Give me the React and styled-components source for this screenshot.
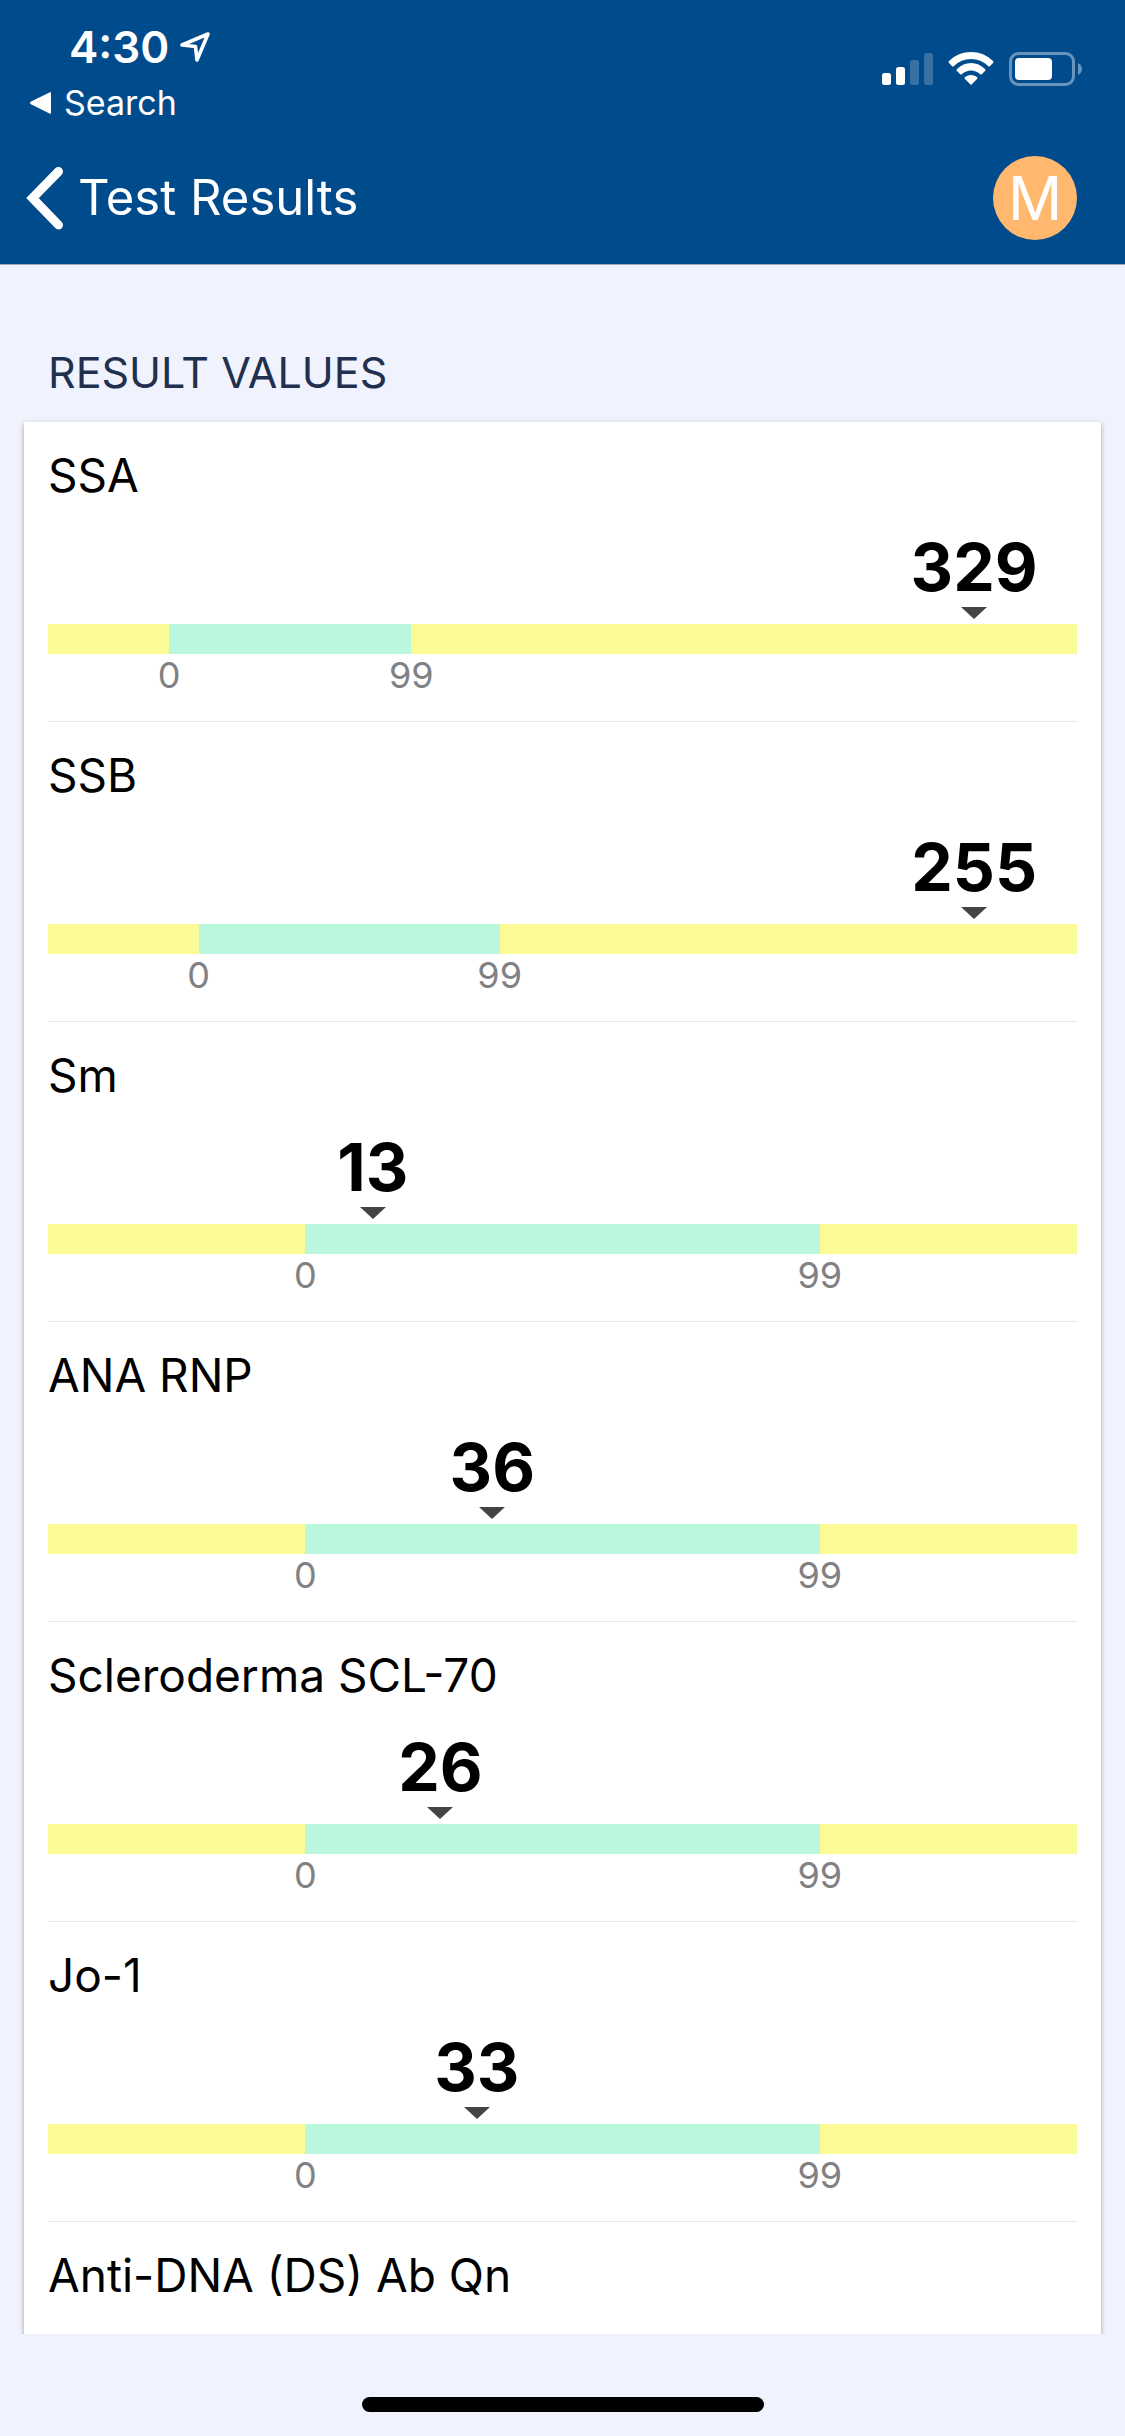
import React from 'react';
import styled, { createGlobalStyle } from 'styled-components';

const GlobalStyle = createGlobalStyle`
    body {
        margin: 0;
        background: #f0f3fd;
        font-family: Inter, "Liberation Sans", sans-serif;
    }

    * {
        box-sizing: border-box;
    }

    button {
        padding: 0;
        border: 0;
        background: none;
        color: inherit;
        font: inherit;
        cursor: pointer;
    }
`;

const Screen = styled.div`
    display: flex;
    flex-direction: column;
    height: 100vh;
`;

const Header = styled.header`
    flex: none;
    background: #004b8b;
    color: #fff;
    border-bottom: 1px solid #a0a7b3;
`;

const StatusBar = styled.div`
    display: flex;
    justify-content: space-between;
    height: 132px;
    padding: 6px 42px 0 30px;
`;

const StatusLeft = styled.div`
    display: flex;
    flex-direction: column;
    align-items: flex-start;
    padding-top: 13px;
`;

const Clock = styled.div`
    display: flex;
    align-items: center;
    gap: 10px;
    padding-left: 39px;
    font-size: 44px;
    font-weight: 600;
    line-height: 56px;
`;

const ReturnButton = styled.button`
    display: flex;
    align-items: center;
    gap: 12px;
    font-size: 34px;
    line-height: 56px;
`;

const StatusIcons = styled.div`
    display: flex;
    align-items: center;
    gap: 15px;
`;

const NavBar = styled.nav`
    display: flex;
    align-items: center;
    justify-content: space-between;
    height: 132px;
    padding: 0 48px 0 26px;
`;

const BackButton = styled.button`
    display: flex;
    align-items: center;
    gap: 14px;
    font-size: 49px;
    line-height: 60px;
`;

const Avatar = styled.button`
    width: 84px;
    height: 84px;
    border-radius: 50%;
    background: #ffb86e;
    font-size: 60px;
    line-height: 84px;
    text-align: center;
`;

const Content = styled.main`
    display: flex;
    flex: 1;
    flex-direction: column;
    min-height: 0;
    padding: 77px 24px 0;
    overflow: hidden;
`;

const SectionTitle = styled.h2`
    flex: none;
    margin: 0;
    padding: 0 24px 20px;
    color: #22304f;
    font-size: 43px;
    font-weight: 400;
    line-height: 60px;
    text-transform: uppercase;
`;

const Card = styled.ul`
    flex: none;
    margin: 0;
    padding: 0 24px;
    list-style: none;
    background: #fff;
    box-shadow: 0 2px 5px rgba(0, 0, 0, 0.32);
`;

const ResultRow = styled.li`
    height: 300px;
    padding-top: 24px;
    border-bottom: 1px solid #e5e6e8;
`;

const ResultName = styled.div`
    color: #000;
    font-size: 46px;
    line-height: 58px;
`;

const Marker = styled.div`
    display: flex;
    flex-direction: column;
    align-items: center;
    width: 0;
    padding: 23px 0 5px;
`;

const Value = styled.div`
    color: #000;
    font-size: 66px;
    font-weight: 700;
    line-height: 80px;
`;

const Pointer = styled.div`
    border: 13px solid transparent;
    border-top: 12px solid #444;
    border-bottom: 0;
`;

const Scale = styled.div`
    display: grid;
    grid-template-rows: 30px 42px;
`;

const Zone = styled.div`
    background: ${props => props.$normal ? '#bbf7dc' : '#fafa96'};
`;

const Limit = styled.div`
    display: flex;
    grid-column: ${props => props.$column};
    justify-content: center;
    width: 0;
    color: #808184;
    font-size: 36px;
    line-height: 42px;
`;

const HomeArea = styled.footer`
    display: flex;
    flex: none;
    justify-content: center;
    height: 102px;
    padding-top: 63px;
`;

const HomeIndicator = styled.div`
    width: 402px;
    height: 15px;
    border-radius: 8px;
    background: #000;
`;

const results = [
    { name: 'SSA', value: 329, low: 0, high: 99 },
    { name: 'SSB', value: 255, low: 0, high: 99 },
    { name: 'Sm', value: 13, low: 0, high: 99 },
    { name: 'ANA RNP', value: 36, low: 0, high: 99 },
    { name: 'Scleroderma SCL-70', value: 26, low: 0, high: 99 },
    { name: 'Jo-1', value: 33, low: 0, high: 99 },
    { name: 'Anti-DNA (DS) Ab Qn' },
];

// Half a normal range is shown on each side, a high value sits at 90% of the bar
const getScale = ({ value, low, high }) => {
    const margin = (high - low) / 2;
    const start = low - margin;
    const span = value > high + margin ? (value - start) / 0.9 : (high - low) * 2;

    return {
        before: margin / span * 100,
        normal: (high - low) / span * 100,
        marker: (value - start) / span * 100,
    };
};

const LocationIcon = () => (
    <svg width="32" height="32" viewBox="0 0 32 32" fill="none" stroke="#fff" strokeWidth="3.600" strokeLinejoin="round" aria-hidden="true">
        <path d="M29 3 3 14 16.500 15.500 18 29Z" />
    </svg>
);

const ReturnIcon = () => (
    <svg width="22" height="24" viewBox="0 0 22 24" fill="#fff" aria-hidden="true">
        <path d="M20 1.200 1 10.500Q-1 12 1 13.300L20 22.800Q21 23 21 22V2Q21 1 20 1.200Z" />
    </svg>
);

const SignalIcon = () => (
    <svg width="51" height="34" viewBox="0 0 51 34" fill="#fff" aria-hidden="true">
        <rect x="0" y="21" width="9" height="12" rx="2.500" />
        <rect x="14" y="15" width="9" height="18" rx="2.500" />
        <rect x="28" y="8" width="9" height="25" rx="2.500" opacity="0.22" />
        <rect x="42" y="1" width="9" height="32" rx="2.500" opacity="0.22" />
    </svg>
);

const WifiIcon = () => (
    <svg width="46" height="34" viewBox="0 0 46 34" fill="#fff" aria-hidden="true">
        <path d="M1 9Q10 0 23 0T45 9Q46 10 45 11L42 14Q41 15 40 14Q33 7 23 7T6 14Q5 15 4 14L1 11Q0 10 1 9Z" />
        <path d="M9 17Q15 11 23 11T37 17Q38 18 37 19L34 22Q33 23 32 22Q28 18.500 23 18.500T14 22Q13 23 12 22L9 19Q8 18 9 17Z" />
        <path d="M17 25Q20 23 23 23T29 25Q30 26 29 27L23 33L17 27Q16 26 17 25Z" />
    </svg>
);

const BatteryIcon = () => (
    <svg width="74" height="34" viewBox="0 0 74 34" aria-hidden="true">
        <rect x="1.500" y="1.500" width="63" height="31" rx="8" fill="none" stroke="#6893bb" strokeWidth="3" />
        <rect x="6" y="6" width="37" height="22" rx="4" fill="#fff" />
        <path d="M69 11Q73 13 73 17T69 23Z" fill="#6893bb" />
    </svg>
);

const ChevronIcon = () => (
    <svg width="38" height="64" viewBox="0 0 38 64" fill="none" stroke="#fff" strokeWidth="9" strokeLinecap="round" strokeLinejoin="miter" aria-hidden="true">
        <path d="M32.500 5.500 6.500 32 32.500 59" />
    </svg>
);

const Result = ({ result }) => {
    if (result.value === undefined) {
        return (
            <ResultRow>
                <ResultName>{result.name}</ResultName>
            </ResultRow>
        );
    }

    const { before, normal, marker } = getScale(result);

    return (
        <ResultRow>
            <ResultName>{result.name}</ResultName>
            <Marker style={{ marginLeft: `${marker}%` }}>
                <Value>{result.value}</Value>
                <Pointer />
            </Marker>
            <Scale style={{ gridTemplateColumns: `${before}% ${normal}% 1fr` }}>
                <Zone />
                <Zone $normal />
                <Zone />
                <Limit $column={2}>{result.low}</Limit>
                <Limit $column={3}>{result.high}</Limit>
            </Scale>
        </ResultRow>
    );
}

const App = () => {
    return (
        <Screen>
            <GlobalStyle />
            <Header>
                <StatusBar>
                    <StatusLeft>
                        <Clock>4:30 <LocationIcon /></Clock>
                        <ReturnButton type="button"><ReturnIcon /> Search</ReturnButton>
                    </StatusLeft>
                    <StatusIcons>
                        <SignalIcon />
                        <WifiIcon />
                        <BatteryIcon />
                    </StatusIcons>
                </StatusBar>
                <NavBar>
                    <BackButton type="button"><ChevronIcon /> Test Results</BackButton>
                    <Avatar type="button">M</Avatar>
                </NavBar>
            </Header>
            <Content>
                <SectionTitle>Result Values</SectionTitle>
                <Card>
                    {results.map(result => <Result key={result.name} result={result} />)}
                </Card>
            </Content>
            <HomeArea><HomeIndicator /></HomeArea>
        </Screen>
    );
}

export default App;
